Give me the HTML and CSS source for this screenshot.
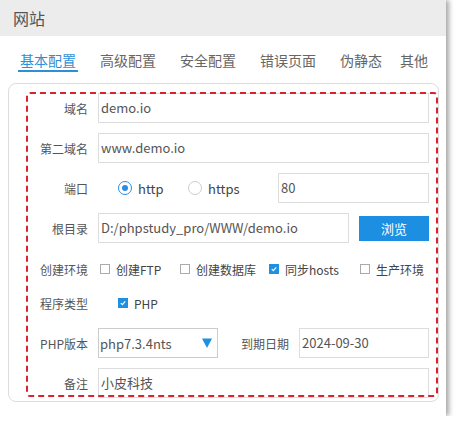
FILE: index.html
```html
<!DOCTYPE html>
<html lang="zh-CN">
<head>
<meta charset="utf-8">
<title>网站</title>
<link rel="stylesheet" href="styles.css">
</head>
<body>
<div class="dialog">
  <div class="titlebar">网站</div>
  <div class="tabs">
    <span class="tab active">基本配置</span>
    <span class="tab">高级配置</span>
    <span class="tab">安全配置</span>
    <span class="tab">错误页面</span>
    <span class="tab">伪静态</span>
    <span class="tab tab-last">其他</span>
  </div>
  <div class="card">
    <div class="mark">
      <div class="row first">
        <span class="lbl">域名</span>
        <div class="field">demo.io</div>
      </div>
      <div class="row">
        <span class="lbl">第二域名</span>
        <div class="field">www.demo.io</div>
      </div>
      <div class="row">
        <span class="lbl">端口</span>
        <div class="radios">
          <span class="radio-item w70"><span class="radio on"></span>http</span>
          <span class="radio-item w90"><span class="radio"></span>https</span>
        </div>
        <div class="field">80</div>
      </div>
      <div class="row">
        <span class="lbl">根目录</span>
        <div class="field path">D:/phpstudy_pro/WWW/demo.io</div>
        <div class="btn">浏览</div>
      </div>
      <div class="row checkrow">
        <span class="lbl">创建环境</span>
        <div class="checks">
          <span class="check-item"><span class="cb"></span>创建FTP</span>
          <span class="check-item"><span class="cb"></span>创建数据库</span>
          <span class="check-item"><span class="cb on"><svg viewBox="0 0 10 10"><path d="M2.2 5.2 L4.2 7 L7.8 3" /></svg></span>同步hosts</span>
          <span class="check-item"><span class="cb"></span>生产环境</span>
        </div>
      </div>
      <div class="row checkrow second">
        <span class="lbl">程序类型</span>
        <div class="checks single">
          <span class="check-item"><span class="cb on"><svg viewBox="0 0 10 10"><path d="M2.2 5.2 L4.2 7 L7.8 3" /></svg></span>PHP</span>
        </div>
      </div>
      <div class="row phprow">
        <span class="lbl">PHP版本</span>
        <div class="select">
          <span>php7.3.4nts</span>
          <svg class="caret" viewBox="0 0 10 10"><path d="M0 0.5 H10 L5 10 Z" /></svg>
        </div>
        <span class="lbl2">到期日期</span>
        <div class="field">2024-09-30</div>
      </div>
      <div class="row">
        <span class="lbl">备注</span>
        <div class="field">小皮科技</div>
      </div>
      <svg class="mark-line"><rect /></svg>
    </div>
  </div>
</div>
</body>
</html>
```

FILE: styles.css
```css
* { box-sizing: border-box; }

body {
  margin: 0;
  background: #fff;
  font-family: "Noto Sans CJK SC", "Noto Sans", sans-serif;
}

.dialog {
  width: 446px;
  height: 416px;
  background: #fff;
  box-shadow: 3px 0 5px rgba(0, 0, 0, 0.35);
}

.titlebar {
  height: 36px;
  background: #ececec;
  padding-left: 13px;
  font-size: 16px;
  line-height: 36px;
  color: #555;
}

.tabs {
  display: flex;
  gap: 20px;
  height: 47px;
  padding: 14px 0 0 18px;
}

.tab {
  height: 22px;
  padding: 0 2px;
  font-size: 14px;
  line-height: 20px;
  color: #666;
}

.tab.active {
  color: #2d8fd5;
  border-bottom: 2px solid #2d8fd5;
}

.tab-last { margin-left: -6px; }

.card {
  margin: 0 7px 0 8px;
  border: 1px solid #ddd;
  border-radius: 8px;
  padding: 8px 0 3px 17px;
}

.mark {
  position: relative;
  padding: 1px 9px 0 0;
}

.mark-line {
  position: absolute;
  left: 0;
  top: 0;
  width: 100%;
  height: calc(100% - 1px);
  overflow: visible;
  pointer-events: none;
}

.mark-line rect {
  x: 1px;
  y: 1px;
  width: calc(100% - 2px);
  height: calc(100% - 2px);
  rx: 3px;
  fill: none;
  stroke: #d9232e;
  stroke-width: 2;
  stroke-dasharray: 6 4;
}

.row {
  display: flex;
  align-items: center;
  height: 30px;
  margin-top: 10px;
}

.row.first { margin-top: 0; }

.row.checkrow {
  height: 28px;
  margin-top: 12px;
}

.row.checkrow.second { margin-top: 6px; }

.row.phprow { margin-top: 11px; }

.lbl {
  flex: none;
  width: 62px;
  margin-right: 10px;
  text-align: right;
  font-size: 12px;
  color: #555;
}

.lbl2 {
  flex: none;
  margin: 0 10px 0 23px;
  font-size: 12px;
  color: #555;
}

.field {
  flex: 1;
  height: 30px;
  border: 1px solid #ddd;
  padding: 0 2px;
  font-size: 13px;
  line-height: 28px;
  color: #555;
  white-space: nowrap;
}

.field.path {
  flex: none;
  width: 251px;
}

.btn {
  flex: none;
  width: 70px;
  height: 25px;
  margin-left: 10px;
  background: #1c8fe3;
  color: #fff;
  font-size: 13px;
  line-height: 25px;
  text-align: center;
}

.radios {
  display: flex;
  padding-left: 20px;
}

.radio-item {
  display: flex;
  align-items: center;
  gap: 6px;
  font-size: 13px;
  color: #444;
}

.w70 { width: 70px; }
.w90 { width: 90px; }

.radio {
  width: 14px;
  height: 14px;
  border: 1px solid #ccc;
  border-radius: 50%;
  display: flex;
  align-items: center;
  justify-content: center;
}

.radio.on { border-color: #2a8de0; }

.radio.on::after {
  content: "";
  width: 6px;
  height: 6px;
  border-radius: 50%;
  background: #2a8de0;
}

.checks {
  display: grid;
  grid-template-columns: 80px 89px 91px auto;
  padding-left: 2px;
}

.checks.single { padding-left: 20px; }

.check-item {
  display: flex;
  align-items: center;
  gap: 6px;
  font-size: 12px;
  color: #444;
  white-space: nowrap;
}

.cb {
  width: 10px;
  height: 10px;
  border: 1px solid #aaa;
  background: #fff;
}

.cb.on {
  border-color: #1e8fe1;
  background: #1e8fe1;
}

.cb svg {
  display: block;
  width: 8px;
  height: 8px;
}

.cb svg path {
  fill: none;
  stroke: #fff;
  stroke-width: 1.5;
}

.select {
  flex: none;
  width: 120px;
  height: 30px;
  border: 1px solid #ccc;
  padding: 0 5px 0 1px;
  display: flex;
  align-items: center;
  justify-content: space-between;
  font-size: 13px;
  color: #555;
}

.caret {
  width: 10px;
  height: 10px;
}

.caret path { fill: #1e8fe1; }
```
